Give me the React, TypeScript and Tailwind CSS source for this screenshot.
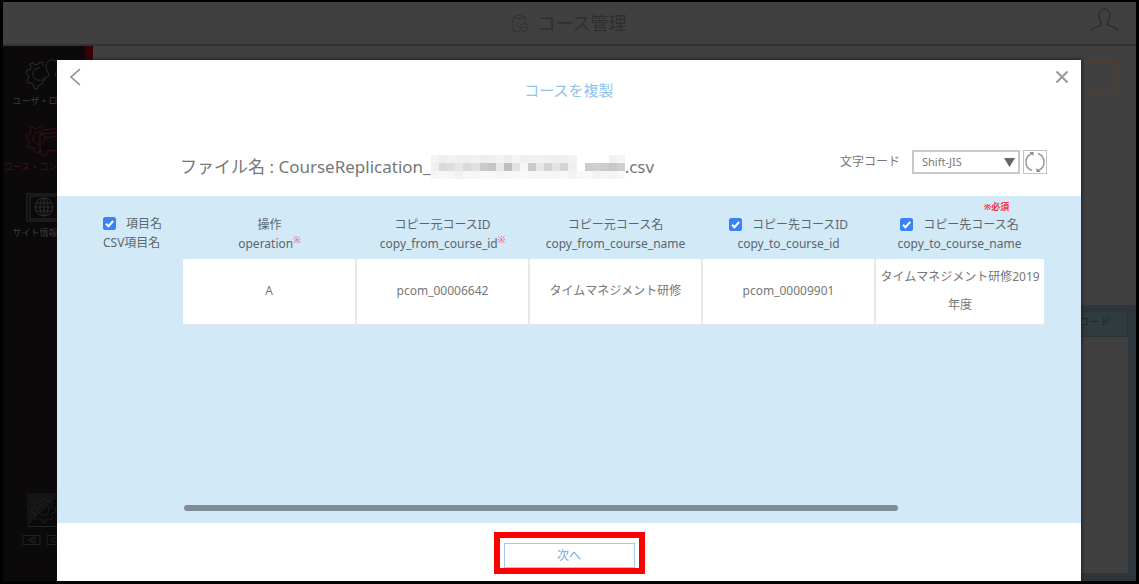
import type { ReactNode } from 'react'

// Masked part of the file name: three rows of 8px cells, '' leaves a cell blank
const mosaic = [
  ['#f4f4f4', '#eeeeee', '#f2f2f2', '#f0f0f0', '#efefef', '#f1f1f1', '#ededed', '#f0f0f0', '#f3f3f3', '#ededed', '#f4f4f4', '#f0f0f0', '#f1f1f1', '#f1f1f1', '#f0f0f0', '#eeeeee', '#efefef', '#f2f2f2', '', '', '', '', '#f0f0f0', '#f5f5f5'],
  ['#f0f0f0', '#d8d9da', '#dedede', '#e6e6e6', '#ddd8d4', '#e0e0e0', '#c9c9c9', '#c6c6c6', '#e8e8e8', '#bebebe', '#e2e3e4', '#f6f6f6', '#cacaca', '#e6e6e6', '#d5d2d2', '#e2e2e2', '#d6d4d4', '#efefef', '', '#cccccc', '#d0d0d0', '#cfcbc6', '#c6c8c9', '#cccfd0'],
  ['#f5f5f5', '#f8f8f8', '#f6f6f6', '#f1f1f1', '#f7f7f7', '#f6f6f6', '#f8f8f8', '#f8f8f8', '#f5f5f5', '#f6f6f6', '#f8f8f8', '#f9f9f9', '#f7f7f7', '#f5f5f5', '#f7f7f7', '#f5f5f5', '#f8f8f8', '#f3f3f3', '#f8f8f8', '#f9f9f9', '#f3f3f3', '#f6f6f6', '#f4f4f4', '#f8f8f8'],
]

const columns = [
  { label: '操作', name: 'operation', mark: true, value: 'A' },
  { label: 'コピー元コースID', name: 'copy_from_course_id', mark: true, value: 'pcom_00006642' },
  { label: 'コピー元コース名', name: 'copy_from_course_name', value: 'タイムマネジメント研修' },
  { label: 'コピー先コースID', name: 'copy_to_course_id', check: true, value: 'pcom_00009901' },
  { label: 'コピー先コース名', name: 'copy_to_course_name', check: true, required: true, value: 'タイムマネジメント研修2019年度' },
]

function Mosaic() {
  return (
    <svg width="194" height="24" viewBox="0 0 192 24" preserveAspectRatio="none" shapeRendering="crispEdges" aria-hidden="true">
      {mosaic.map((row, y) =>
        row.map((fill, x) => fill && <rect key={`${x}-${y}`} x={x * 8} y={y * 8} width="8" height="8" fill={fill} />)
      )}
    </svg>
  )
}

function Check({ label }: { label: string }) {
  return (
    <span className="relative mr-2.5 inline-flex size-[13px]">
      <input
        type="checkbox"
        defaultChecked
        aria-label={label}
        className="peer size-[13px] appearance-none rounded-xs border border-gray-500 bg-white checked:border-[#3b82f6] checked:bg-[#3b82f6]"
      />
      <svg viewBox="0 0 13 13" className="pointer-events-none absolute inset-0 hidden peer-checked:block" fill="none" stroke="#fff" strokeWidth="2">
        <path d="M3 6.8l2.4 2.4L10.2 4" />
      </svg>
    </span>
  )
}

const gear =
  'M15 3h4l1 4 3 1 3-2 3 3-2 3 1 3 4 1v4l-4 1-1 3 2 3-3 3-3-2-3 1-1 4h-4l-1-4-3-1-3 2-3-3 2-3-1-3-4-1v-4l4-1 1-3-2-3 3-3 3 2 3-1z'

function SideItem({ children, label, className }: { children: ReactNode; label: string; className: string }) {
  return (
    <a href="#" className={`flex h-[66px] flex-col items-center text-[9px] leading-4 whitespace-nowrap ${className}`}>
      {children}
      <span>{label}</span>
    </a>
  )
}

function Sidebar() {
  return (
    <nav className="flex w-[82px] flex-col overflow-hidden bg-[#0b090a] pt-3">
      <SideItem label="ユーザ・ロール" className="text-[#3c3c3c]">
        <svg width="40" height="35" viewBox="0 0 40 35" fill="none" stroke="#2e2e2e">
          <path d="M20 20l-3 2-1 3-4 2-1 3-3-1v-3l-3-2-3 0-1-3 2-2-1-3-2-2 1-3h3l1-3-1-3 3-1 2 2 3-1 2-2 3 1v3" transform="translate(2 1)" />
          <path d="M16 22c-4 1-7-2-7-6s3-6 7-6" />
          <path d="M17 23c1-3 7-3 8-6 0-2-3-4-3-8 0-5 3-7 6-7s6 2 6 7c0 4-3 6-3 8 1 3 7 3 8 6" />
        </svg>
      </SideItem>
      <SideItem label="コース・コンテンツ" className="text-[#4e1118]">
        <svg width="40" height="35" viewBox="0 0 40 35" fill="none" stroke="#3c1015">
          <path d="M16 27l-3-1-2 2-3-2v-3l-3-1-3 1-1-3 2-3-1-3-2-2 1-3h3l1-3-1-3 3-1 2 2 3-1 2-2 3 1" transform="translate(2 1)" />
          <path d="M16 20c-4 1-7-2-7-6s3-6 7-6M16 9l3-3 19-2v22l-14 1-3 5-5-2zM18 10l16-2M20 14l14-2M16 9l6 5-4 6" />
        </svg>
      </SideItem>
      <SideItem label="サイト情報管理" className="text-[#3c3c3c]">
        <svg width="37" height="35" viewBox="0 0 37 35" fill="none" stroke="#2e2e2e">
          <rect x="1" y="4" width="35" height="27" />
          <rect x="4" y="6" width="29" height="23" />
          <circle cx="18" cy="17" r="9" />
          <ellipse cx="18" cy="17" rx="4" ry="9" />
          <path d="M9 17h18M18 8v18M10 13h16M10 21h16" />
        </svg>
      </SideItem>
      <div className="mt-auto mb-9 flex flex-col items-center gap-2 text-[#222323]">
        <svg width="34" height="34" viewBox="0 0 34 34" fill="none" stroke="currentColor">
          <rect x="0.500" y="0.500" width="33" height="33" />
          <path d="M0 34V0h34z" fill="#131414" stroke="none" />
          <g transform="translate(3 3) scale(0.8)">
            <path d={gear} />
            <circle cx="17" cy="17" r="7" />
          </g>
        </svg>
        <svg width="44" height="10" viewBox="0 0 44 10" fill="none" stroke="currentColor">
          <path d="M1 .5h17v9H1zM25 .5h17v9H25zM6 5l7-3v6zM30 3h7v4h-7zM10 2v6" />
        </svg>
      </div>
    </nav>
  )
}

function PreviewTable() {
  return (
    <table className="w-full table-fixed border-collapse text-center text-[12px] text-[#5d666b]">
      <colgroup>
        <col className="w-[126px]" />
        <col span={4} />
        <col className="w-[169px]" />
      </colgroup>
      <thead>
        <tr className="h-[63px] align-bottom leading-[19px]">
          <th scope="col" className="pb-[7px] pl-[46px] text-left font-normal whitespace-nowrap">
            <div className="flex items-center"><Check label="項目名" />項目名</div>
            CSV項目名
          </th>
          {columns.map((col) => (
            <th key={col.name} scope="col" className="pb-[6px] font-normal whitespace-nowrap">
              {col.required && <div className="pl-[74px] text-[9px] leading-4 font-bold text-[#f5333f]">※必須</div>}
              <div className="flex items-center justify-center">
                {col.check && <Check label={col.label} />}
                {col.label}
              </div>
              <div className="flex justify-center">
                {col.name}
                {col.mark && <span className="text-[9px] leading-3 text-[#f5455c]">※</span>}
              </div>
            </th>
          ))}
        </tr>
      </thead>
      <tbody>
        <tr className="h-[65px] leading-7 text-[#777]">
          <td />
          {columns.map((col) => (
            <td key={col.name} className="border-r-2 border-b border-[#e8e8e8] bg-white px-1 last:border-r-0">
              {col.value}
            </td>
          ))}
        </tr>
      </tbody>
    </table>
  )
}

function Modal() {
  return (
    <div
      role="dialog"
      aria-labelledby="modal-title"
      className="absolute top-[58px] right-[55px] bottom-0 left-[54px] flex flex-col bg-white shadow-[0_0_4px_#111]"
    >
      <div className="flex items-start justify-between px-3 pt-2">
        <button type="button" aria-label="戻る" className="size-[18px]">
          <svg width="14" height="18" viewBox="0 0 14 18" fill="none" stroke="#888" strokeWidth="1.500">
            <path d="M11 1L2 9l9 8" />
          </svg>
        </button>
        <h2 id="modal-title" className="pt-2.5 text-[15px] leading-6 text-[#8ec3ea]">コースを複製</h2>
        <button type="button" aria-label="閉じる" className="flex size-[18px] items-center justify-end">
          <svg width="14" height="14" viewBox="0 0 14 14" fill="none" stroke="#999" strokeWidth="2">
            <path d="M1.500 1.500l11 11M12.500 1.500l-11 11" />
          </svg>
        </button>
      </div>

      <div className="mt-12 mr-[34px] mb-3 ml-[123px] flex items-center justify-between">
        <p className="flex items-center text-[17px] leading-6 whitespace-nowrap text-[#777]">
          ファイル名 : CourseReplication_
          <Mosaic />
          .csv
        </p>
        <div className="flex items-center pb-2.5 text-[12px] text-[#777]">
          <label htmlFor="encoding" className="mr-3">文字コード</label>
          <div className="relative">
            <select id="encoding" className="h-6 w-[108px] appearance-none border-2 border-[#c8c8c8] bg-white pl-2 text-[11px]">
              <option>Shift-JIS</option>
              <option>UTF-8</option>
            </select>
            <svg width="11" height="9" viewBox="0 0 11 9" className="pointer-events-none absolute top-2 right-[5px]" fill="#666">
              <path d="M0 0h11L5.500 9z" />
            </svg>
          </div>
          <button type="button" aria-label="再読み込み" className="ml-[3px] flex size-6 items-center justify-center border border-[#c4c4c4]">
            <svg width="22" height="22" viewBox="0 0 22 22" fill="none" stroke="#999" strokeWidth="1.500">
              <path d="M8 19.500A9 9 0 0 1 8 2.500M14 2.500a9 9 0 0 1 0 17" />
              <path d="M5.500 1h4v4zM16.500 21h-4v-4z" fill="#888" stroke="none" />
            </svg>
          </button>
        </div>
      </div>

      <div className="flex flex-1 flex-col bg-[#d2e9f8] pr-[37px]">
        <PreviewTable />
        <div className="mt-auto mb-3 ml-[127px]">
          <div className="h-[6px] w-[83%] rounded-full bg-[#808d96]" />
        </div>
      </div>

      <div className="flex h-[58px] justify-center">
        <div className="mt-[9px] h-[42px] border-[6px] border-[#ff0000] px-1 pt-[5px]">
          <button type="button" className="block h-[25px] w-[131px] border border-[#a5c8e8] text-[12px] text-[#7ba7d4]">
            次へ
          </button>
        </div>
      </div>
    </div>
  )
}

export default function App() {
  return (
    <div className="relative flex min-h-screen flex-col border-x-[3px] border-t-2 border-b-[3px] border-black bg-[#404040] font-['Noto_Sans','Noto_Sans_CJK_JP',sans-serif]">
      <header className="relative flex h-11 items-center justify-center border-b-2 border-[#323232] text-[#2e2e2e]">
        <svg width="17" height="19" viewBox="0 0 17 19" fill="none" stroke="#333" className="mr-2">
          <path d="M8 17H1V3h3M10 3h3v6M4 1.500h6v3H4zM7 8l-3 3 3 3" />
          <circle cx="12" cy="13.500" r="4" />
          <path d="M9 13.500h6" />
        </svg>
        <h1 className="text-[18px]">コース管理</h1>
        <button type="button" aria-label="アカウント" className="absolute top-1.5 right-[17px]">
          <svg width="29" height="24" viewBox="0 0 29 24" fill="none" stroke="#2c2c2c" strokeWidth="1.500">
            <path d="M1 23c1-4 7-4 10-6 2-2-2-5-2-9 0-4 2-7 5.500-7S20 4 20 8c0 4-4 7-2 9 3 2 9 2 10 6" />
          </svg>
        </button>
      </header>

      <div className="flex flex-1">
        <Sidebar />
        <div className="h-[30px] w-2 bg-[#3a0008]" />
        <main className="flex flex-1 flex-col items-end">
          <div className="mt-4 mr-[18px] h-[30px] w-40 border-2 border-[#523d28]" />
          <section className="mt-[213px] flex w-full flex-1 flex-col bg-[#2c363c] pt-1.5 pr-2 pb-2">
            <div className="h-[26px] self-end border border-[#29343a] bg-[#303b40] px-4 text-[11px] leading-5 text-[#20272b]">ダウンロード</div>
            <div className="flex-1 bg-[#404040]" />
          </section>
        </main>
      </div>

      <Modal />
    </div>
  )
}
